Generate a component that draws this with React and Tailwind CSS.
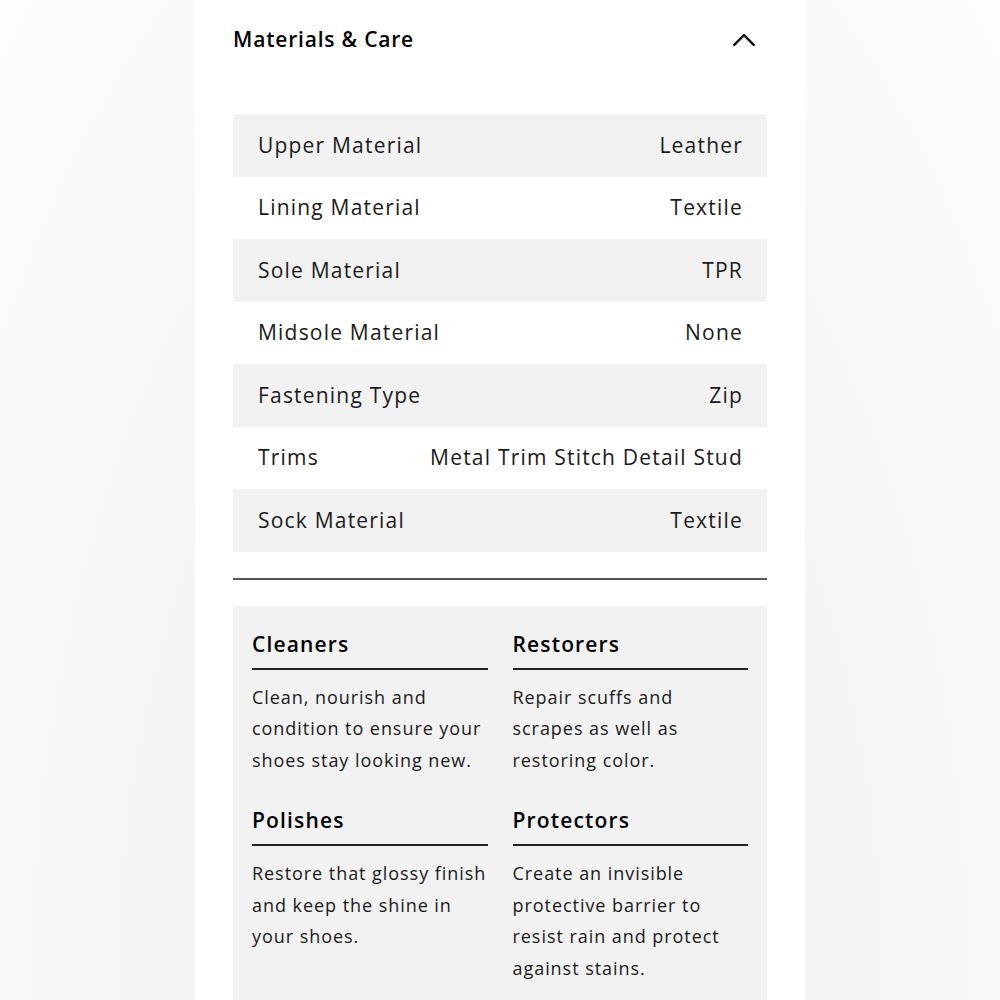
import React from "react";

const rows = [
  ["Upper Material", "Leather"],
  ["Lining Material", "Textile"],
  ["Sole Material", "TPR"],
  ["Midsole Material", "None"],
  ["Fastening Type", "Zip"],
  ["Trims", "Metal Trim Stitch Detail Stud"],
  ["Sock Material", "Textile"],
];

const care = [
  ["Cleaners", ["Clean, nourish and", "condition to ensure your", "shoes stay looking new."]],
  ["Restorers", ["Repair scuffs and", "scrapes as well as", "restoring color."]],
  ["Polishes", ["Restore that glossy finish", "and keep the shine in", "your shoes."]],
  ["Protectors", ["Create an invisible", "protective barrier to", "resist rain and protect", "against stains."]],
];

export default function App() {
  return (
    <div
      className="min-h-screen w-full flex justify-center bg-[radial-gradient(ellipse_at_50%_100%,#e9e9e9_0%,#f4f4f4_45%,#fdfdfd_100%)]"
      style={{ fontFamily: '"Open Sans", "Noto Sans", sans-serif' }}
    >
      <div className="w-[610px] h-[1000px] bg-white px-[38px] text-[#1a1a1a] overflow-hidden">
        <div className="h-[80px] flex items-center justify-between">
          <h2 className="text-[21px] font-semibold text-black tracking-[0.8px]">Materials &amp; Care</h2>
          <svg width="26" height="26" viewBox="0 0 24 24" fill="none" stroke="#111" strokeWidth="2.2" strokeLinecap="round" strokeLinejoin="round" className="mr-[10px]">
            <path d="M3 16.5 L12 7.5 L21 16.5" />
          </svg>
        </div>
        <div className="mt-[34px]">
          {rows.map(([k, v], i) => (
            <div
              key={k}
              className={`h-[62.5px] flex items-center justify-between pl-[25px] pr-[24px] text-[21px] tracking-[1.2px] ${i % 2 === 0 ? "bg-[#f2f2f2]" : "bg-white"}`}
            >
              <span>{k}</span>
              <span>{v}</span>
            </div>
          ))}
        </div>
        <div className="mt-[26px] h-[2px] bg-[#555]" />
        <div className="mt-[26px] bg-[#f2f2f2] px-[19px] pt-[24px] pb-[30px] grid grid-cols-2 gap-x-[25px] gap-y-[30px]">
          {care.map(([h, lines]) => (
            <div key={h}>
              <div className="text-[21px] font-semibold text-black leading-[28px] pb-[10px] border-b-2 border-[#222] tracking-[1.15px]">{h}</div>
              <p className="mt-[12px] text-[18px] leading-[31.5px] text-[#1a1a1a] tracking-[0.95px] whitespace-nowrap">
                {lines.map((l, j) => (
                  <React.Fragment key={j}>
                    {l}
                    {j < lines.length - 1 && <br />}
                  </React.Fragment>
                ))}
              </p>
            </div>
          ))}
        </div>
      </div>
    </div>
  );
}
